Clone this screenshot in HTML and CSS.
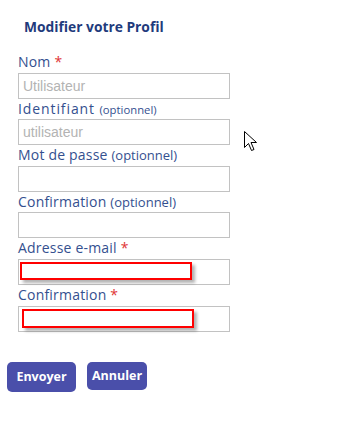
FILE: index.html
```
<!DOCTYPE html>
<html lang="fr">
<head>
    <meta charset="UTF-8">
    <meta name="viewport" content="width=device-width, initial-scale=1.0">
    <title>Modifier votre Profil</title>
    <link rel="stylesheet" href="styles.css">
</head>
<body>
    <div class="page">
        <h2 class="title">Modifier votre Profil</h2>
        <form class="profile">
            <label class="label" for="name">Nom <span class="req">*</span></label>
            <div class="field"><input class="input" id="name" placeholder="Utilisateur"></div>

            <label class="label login" for="login">Identifiant <small>(optionnel)</small></label>
            <div class="field"><input class="input" id="login" placeholder="utilisateur"></div>

            <label class="label" for="pass">Mot de passe <small>(optionnel)</small></label>
            <div class="field"><input class="input" id="pass" type="password"></div>

            <label class="label" for="pass2">Confirmation <small>(optionnel)</small></label>
            <div class="field"><input class="input" id="pass2" type="password"></div>

            <label class="label" for="mail">Adresse e-mail <span class="req">*</span></label>
            <div class="field">
                <input class="input" id="mail">
                <div class="mark"></div>
            </div>

            <label class="label" for="mail2">Confirmation <span class="req">*</span></label>
            <div class="field">
                <input class="input" id="mail2">
                <div class="mark second"></div>
            </div>
        </form>
        <div class="buttons">
            <button class="btn send">Envoyer</button>
            <button class="btn cancel">Annuler</button>
        </div>
    </div>

    <svg class="cursor" width="13" height="21" viewBox="0 0 13 21">
        <path d="M0.5 0.5 L0.5 16.5 L4.5 12.5 L7.5 19.5 L10 18.5 L7 11.5 L12.5 11.5 Z" fill="#fff" stroke="#000" stroke-width="1"/>
    </svg>
</body>
</html>
```

FILE: styles.css
```
body {
    margin: 0;
    background: #fff;
    font-family: "Open Sans", "DejaVu Sans", sans-serif;
}
.page {
    position: relative;
    padding: 18px 0 0 7px;
}
.title {
    margin: 0 0 0 17px;
    font-size: 13.8px;
    font-weight: bold;
    line-height: 18px;
    color: #1f3b7c;
}
.profile {
    margin: 16px 0 0 11px;
    width: 212px;
}
.label {
    display: block;
    height: 20.6px;
    line-height: 20px;
    font-size: 14px;
    letter-spacing: 0.2px;
    color: #34508f;
    white-space: nowrap;
}
.label small {
    font-size: 13px;
    letter-spacing: 0;
}
.label.login {
    letter-spacing: 0.9px;
}
.label.login small {
    font-size: 11.3px;
}
.req {
    color: #e03434;
}
.field {
    position: relative;
    height: 26px;
}
.input {
    box-sizing: border-box;
    width: 212px;
    height: 26px;
    margin: 0;
    padding: 0 4px;
    border: 1px solid #c2c2c2;
    border-radius: 0;
    outline: none;
    font-family: "Liberation Sans", Arial, sans-serif;
    font-size: 14px;
}
.input::placeholder {
    color: #b3b3b3;
}
.mark {
    position: absolute;
    left: 2px;
    top: 3px;
    width: 172px;
    height: 18px;
    box-sizing: border-box;
    border: 2px solid #f00;
    box-shadow: 3px 3px 3px rgba(0, 0, 0, 0.3);
}
.mark.second {
    left: 4px;
    height: 19px;
}
.buttons {
    display: flex;
    align-items: flex-start;
    gap: 11px;
    margin-top: 30px;
}
.btn {
    border: none;
    border-radius: 5px;
    background: #4a4faa;
    color: #fff;
    font-family: "Open Sans", "DejaVu Sans", sans-serif;
    font-weight: bold;
    font-size: 12.5px;
    padding: 0;
    cursor: pointer;
}
.send {
    width: 69px;
    height: 30px;
}
.cancel {
    width: 60px;
    height: 28px;
}
.cursor {
    position: absolute;
    left: 244px;
    top: 131px;
}
```
